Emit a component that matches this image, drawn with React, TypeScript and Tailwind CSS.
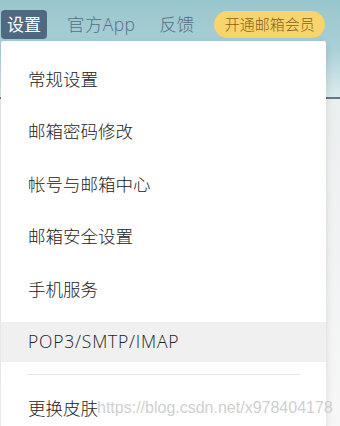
import React from "react";

const items = ["常规设置", "邮箱密码修改", "帐号与邮箱中心", "邮箱安全设置", "手机服务", "POP3/SMTP/IMAP"];

export default function App() {
  return (
    <div
      className="relative w-[340px] h-[426px] overflow-hidden bg-[#f3f4f5]"
      style={{ fontFamily: '"Open Sans", "Noto Sans CJK SC", sans-serif' }}
    >
      {/* header band */}
      <div className="h-[97px] bg-gradient-to-b from-[#98c6cd] via-[#a9d0d6] to-[#dcebed]" />
      <div className="h-[2px] bg-[#5d7890]" />
      <div className="h-[327px] bg-gradient-to-b from-[#eceff0] to-[#f7f7f7]" />

      {/* nav */}
      <div className="absolute top-[10px] left-[1px] flex items-center font-light">
        <div className="h-[29px] px-[6px] flex items-center rounded-[4px] bg-[#4f6a80] text-white text-[17px] font-normal">
          设置
        </div>
        <div className="ml-[20px] text-[17.5px] text-[#566e86] tracking-[0.4px]">官方App</div>
        <div className="ml-[24px] text-[17.5px] text-[#566e86]">反馈</div>
        <div className="ml-[20px] h-[27px] w-[111px] flex items-center justify-center rounded-full bg-[#f8d46c] text-[15px] text-[#86621a]">
          开通邮箱会员
        </div>
      </div>

      {/* dropdown */}
      <div className="absolute top-[41px] left-[1px] w-[325px] h-[400px] bg-white rounded-[2px] shadow-[0_2px_8px_rgba(0,0,0,0.12)] pt-[18px] font-light">
        <div className="flex flex-col gap-[12.5px]">
          {items.map((t, i) => (
            <div
              key={t}
              className={
                i === items.length - 1
                  ? "h-[40px] flex items-center pl-[27px] text-[17.5px] text-[#222] bg-[#f0f0f0] tracking-[0.8px]"
                  : "h-[40px] flex items-center pl-[27px] text-[17.5px] text-[#222]"
              }
            >
              {t}
            </div>
          ))}
        </div>
        <div className="mx-[26px] mt-[12px] h-[1px] bg-[#e6e6e6]" />
        <div className="mt-[14px] h-[40px] flex items-center pl-[27px] text-[17.5px] text-[#222]">更换皮肤</div>
      </div>

      {/* watermark */}
      <div
        className="absolute top-[396px] left-[97px] text-[16px] text-[#cfcfcf]"
        style={{ fontFamily: '"Liberation Sans", Arial, sans-serif' }}
      >
        https://blog.csdn.net/x978404178
      </div>
    </div>
  );
}
